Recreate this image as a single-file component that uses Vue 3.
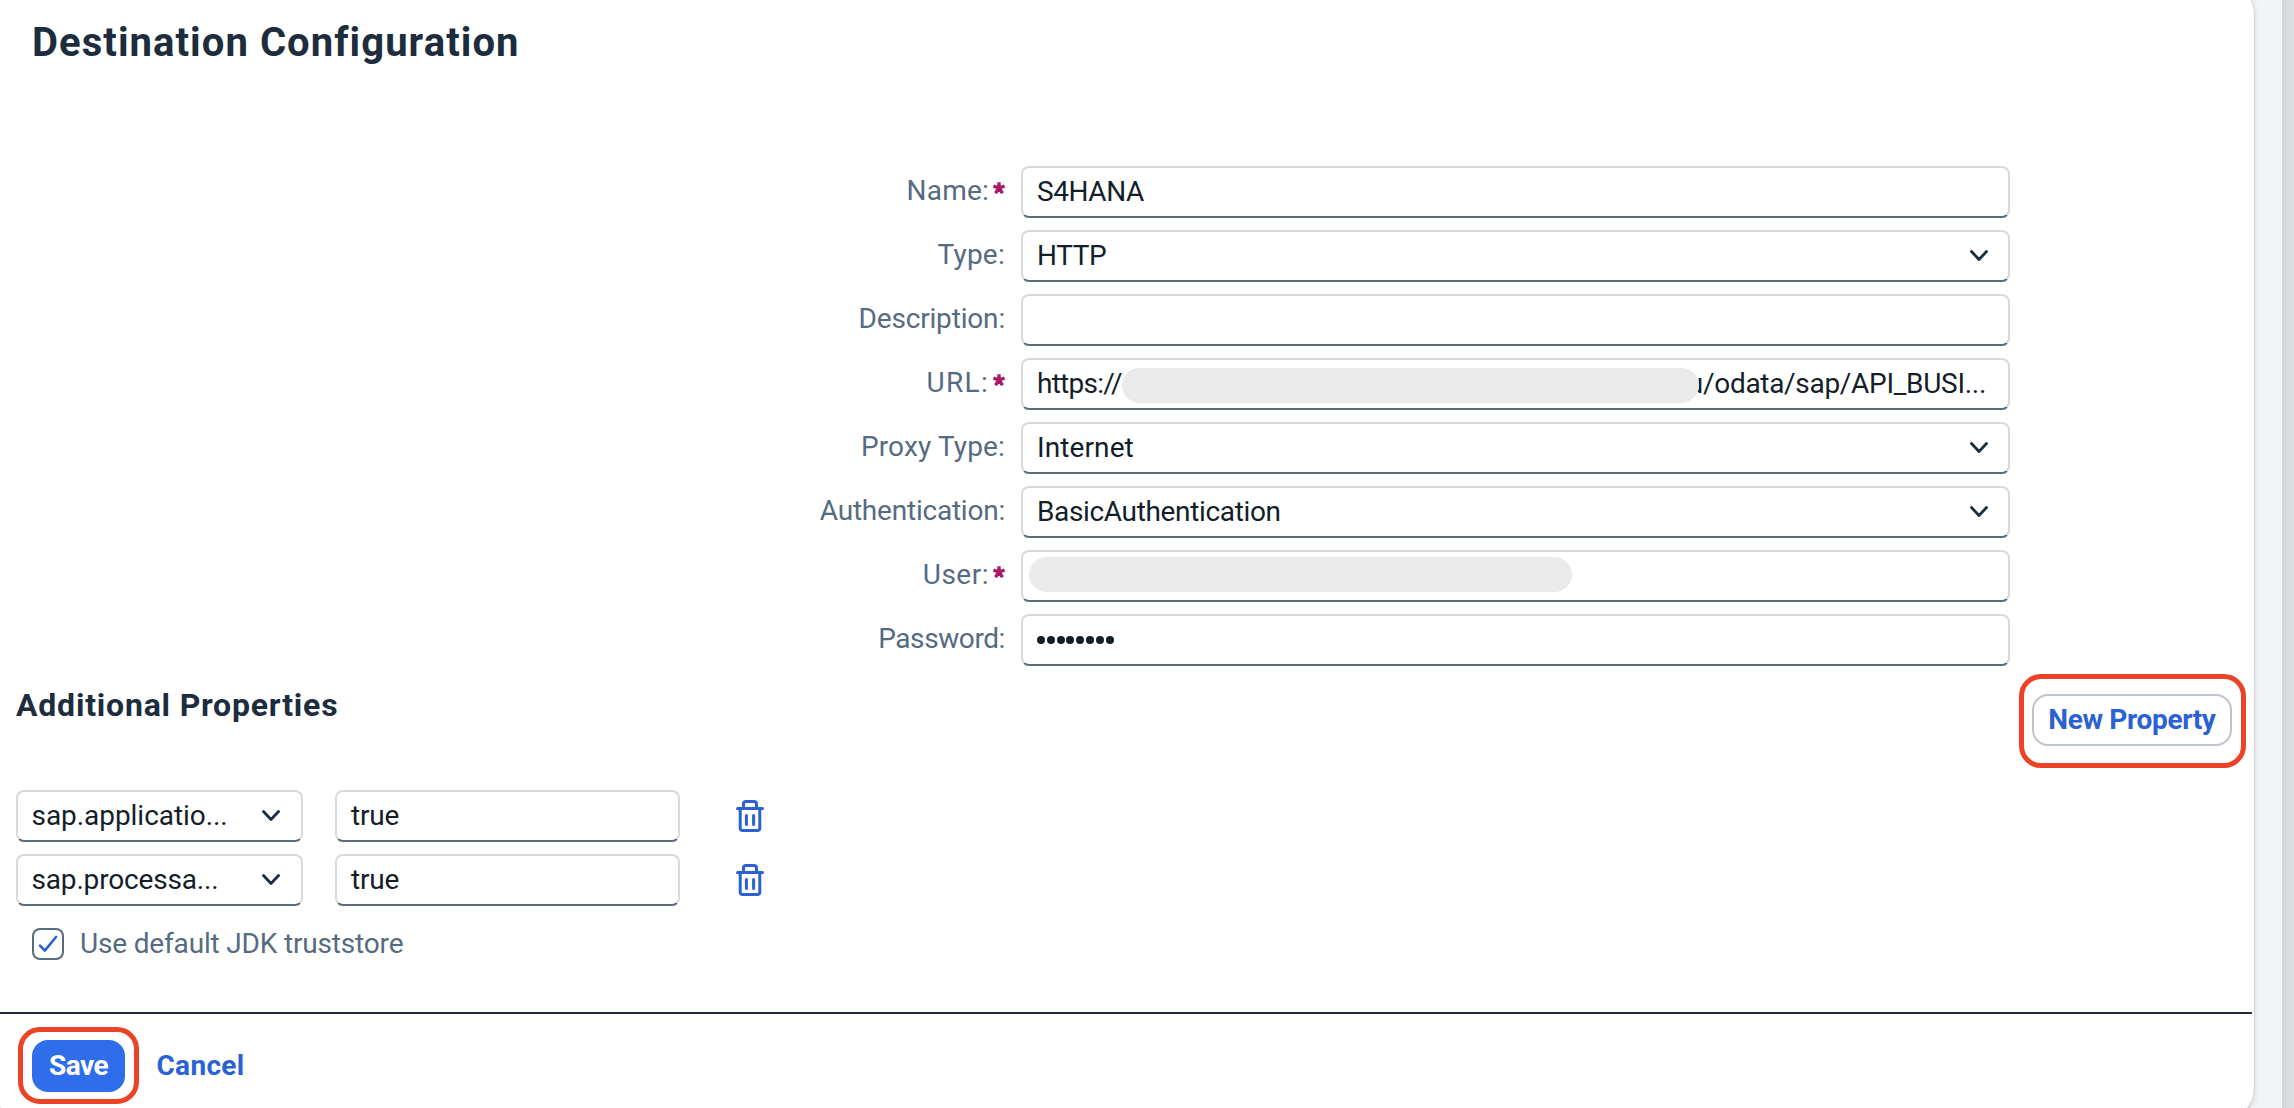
<script setup>
const fields = [
  { label: 'Name:', ls: 0.2, required: true, value: 'S4HANA', vs: -0.42 },
  { label: 'Type:', ls: 0.25, value: 'HTTP', vs: -0.4, select: true },
  { label: 'Description:', ls: -0.17, value: '' },
  { label: 'URL:', ls: 1.3, required: true, value: 'https://', vs: -0.75, tail: 'u/odata/sap/API_BUSI...', mask: 'url' },
  { label: 'Proxy Type:', ls: 0.15, value: 'Internet', vs: 0.1, select: true },
  { label: 'Authentication:', ls: -0.22, value: 'BasicAuthentication', vs: -0.35, select: true },
  { label: 'User:', ls: 0.5, required: true, value: '', mask: 'user' },
  { label: 'Password:', ls: -0.4, value: '', dots: 8 },
]
const properties = [
  { key: 'sap.applicatio...', ks: -0.05, value: 'true' },
  { key: 'sap.processa...', ks: -0.17, value: 'true' },
]
</script>

<template>
  <div class="page">
    <main class="panel">
      <h1>Destination Configuration</h1>

      <form class="form">
        <div v-for="f in fields" :key="f.label" class="row">
          <div class="label">
            <span :style="{ letterSpacing: f.ls + 'px' }">{{ f.label }}</span>
            <svg v-if="f.required" class="star" viewBox="0 0 12 12">
              <path d="M6 6V0.2M6 6L0.4 4.2M6 6L11.6 4.2M6 6L2.5 11.2M6 6L9.5 11.2" />
            </svg>
          </div>
          <div class="field">
            <span class="value" :style="{ letterSpacing: (f.vs || 0) + 'px' }">{{ f.value }}</span>
            <span v-if="f.dots" class="dots"><i v-for="n in f.dots" :key="n"></i></span>
            <span v-if="f.tail" class="tail">{{ f.tail }}</span>
            <span v-if="f.mask" class="mask" :class="f.mask"></span>
            <svg v-if="f.select" class="chevron" viewBox="0 0 18 12">
              <path d="M1.5 1.5L9 9.5L16.5 1.5" />
            </svg>
          </div>
        </div>
      </form>

      <section class="extra">
        <h2>Additional Properties</h2>
        <div class="callout wide"><button class="outline">New Property</button></div>
      </section>

      <div class="props">
        <div v-for="p in properties" :key="p.key" class="prop">
          <div class="field key">
            <span class="value" :style="{ letterSpacing: p.ks + 'px' }">{{ p.key }}</span>
            <svg class="chevron" viewBox="0 0 18 12"><path d="M1.5 1.5L9 9.5L16.5 1.5" /></svg>
          </div>
          <div class="field val"><span class="value">{{ p.value }}</span></div>
          <svg class="trash" viewBox="0 0 28 32">
            <path d="M1.5 8.5H26.5M4.2 8.5V28Q4.2 30.5 6.7 30.5H21.3Q23.8 30.5 23.8 28V8.5M7.5 8.5V4Q7.5 1.5 10 1.5H18Q20.5 1.5 20.5 4V8.5M10.4 15.5V24.5M17.6 15.5V24.5" />
          </svg>
        </div>
      </div>

      <div class="trust">
        <span class="box">
          <svg viewBox="0 0 28 28"><path d="M6 15.6L10.8 20.6L22 7" /></svg>
        </span>
        <span>Use default JDK truststore</span>
      </div>

      <footer>
        <div class="callout small"><button class="primary">Save</button></div>
        <button class="link">Cancel</button>
      </footer>
    </main>
    <aside></aside>
  </div>
</template>

<style>
html, body { margin: 0; overflow: hidden; }
</style>

<style scoped>
* { box-sizing: border-box; }
.page {
  width: 2294px;
  height: 1108px;
  display: flex;
  overflow: hidden;
  background: #f3f4f6;
  font: 28px/48px Roboto, sans-serif;
  color: #131e29;
}
.panel {
  flex: none;
  width: 2260px;
  height: 1138px;
  margin: -18px 28px 0 -6px;
  padding: 18px 0 0 6px;
  background: #fff;
  border-radius: 32px;
  box-shadow: 0 0 2px rgba(34, 53, 72, 0.32), 0 3px 8px rgba(34, 53, 72, 0.14);
}
aside {
  flex: none;
  width: 12px;
  background: linear-gradient(90deg, #d0d4d8, #dadde0 50%, #dfe2e5);
}
h1, h2 { margin: 0; color: #1d2d3e; font-weight: 700; }
h1 {
  height: 166px;
  padding: 19px 0 0 32px;
  font-size: 40px;
  line-height: 48px;
  letter-spacing: 1.06px;
}
.form { display: flex; flex-direction: column; gap: 12px; }
.row { display: flex; height: 52px; }
.label {
  width: 1005px;
  margin-right: 16px;
  padding-top: 1px;
  display: flex;
  justify-content: flex-end;
  color: #556b82;
  white-space: nowrap;
}
.star {
  width: 12px;
  height: 12px;
  margin: 15px 0 0 4px;
  fill: none;
  stroke: #aa1a66;
  stroke-width: 3.4;
}
.field {
  position: relative;
  display: flex;
  align-items: center;
  width: 989px;
  height: 52px;
  padding: 0 16px 1px 14px;
  border: 2px solid #d5dade;
  border-bottom-color: #556b81;
  border-radius: 8px;
  white-space: nowrap;
}
.chevron {
  width: 18px;
  height: 12px;
  margin-left: auto;
  margin-right: 4px;
  fill: none;
  stroke: #1d2d3e;
  stroke-width: 2.8;
  stroke-linecap: round;
  stroke-linejoin: round;
}
.tail { margin-left: auto; margin-right: 6px; letter-spacing: -0.3px; }
.mask {
  position: absolute;
  height: 35px;
  border-radius: 18px;
  background: #eaeaea;
}
.mask.url { left: 99px; top: 8px; width: 577px; }
.mask.user { left: 6px; top: 5px; width: 543px; }
.dots { display: flex; gap: 1.8px; }
.dots i { width: 8px; height: 8px; border-radius: 50%; background: #131e29; }
.extra {
  display: flex;
  justify-content: space-between;
  height: 124px;
}
h2 {
  padding: 15px 0 0 16px;
  font-size: 32px;
  line-height: 48px;
  letter-spacing: 0.8px;
}
.callout {
  display: flex;
  align-items: center;
  justify-content: center;
  border: 5px solid #ec4226;
  border-radius: 22px;
}
.wide { width: 227px; height: 94px; margin: 8px 8px 0 0; padding: 0 1px 2px 0; }
.small { width: 121px; height: 77px; }
button {
  font: 700 28px/48px Roboto, sans-serif;
  height: 52px;
  padding: 0;
  border: 0;
  background: none;
  color: #2a62d4;
  white-space: nowrap;
}
.outline {
  width: 200px;
  border: 2px solid #bcc3ca;
  border-radius: 16px;
  letter-spacing: -0.35px;
}
.primary {
  width: 93px;
  border-radius: 16px;
  background: #2f6eeb;
  color: #fff;
  letter-spacing: -0.5px;
}
.link { margin: 13px 0 0 17.5px; letter-spacing: 0.3px; }
.props { display: flex; flex-direction: column; gap: 12px; padding-left: 16px; }
.prop { display: flex; align-items: center; height: 52px; }
.key { width: 287px; padding-left: 13.5px; }
.key .chevron { margin-right: 5px; }
.val { width: 345px; margin-left: 32px; letter-spacing: -0.2px; }
.trash {
  width: 28px;
  height: 32px;
  margin-left: 56px;
  fill: none;
  stroke: #2a62d4;
  stroke-width: 3;
  stroke-linecap: round;
}
.trust {
  display: flex;
  align-items: center;
  height: 76px;
  padding-left: 32px;
  color: #556b82;
  letter-spacing: -0.17px;
}
.box {
  width: 32px;
  height: 32px;
  margin-right: 16px;
  border: 2px solid #556b81;
  border-radius: 8px;
  display: flex;
}
.box svg {
  width: 28px;
  height: 28px;
  fill: none;
  stroke: #2a62d4;
  stroke-width: 2.6;
  stroke-linecap: round;
  stroke-linejoin: round;
}
footer {
  display: flex;
  align-items: flex-start;
  width: 2252px;
  height: 106px;
  margin-top: 30px;
  padding: 13px 0 0 18px;
  border-top: 2px solid #1d2d3e;
}
.link { margin-top: 13px; }
</style>
